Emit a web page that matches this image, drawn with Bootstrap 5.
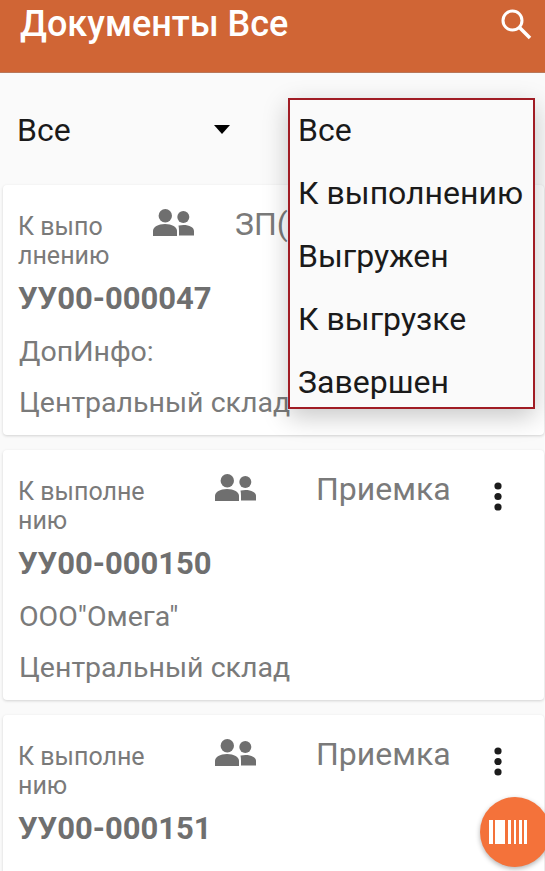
<!DOCTYPE html>
<html lang="ru">
<head>
  <meta charset="UTF-8">
  <title>Документы Все</title>
  <meta name="viewport" content="width=device-width, initial-scale=1">
  <link href="https://cdn.jsdelivr.net/npm/bootstrap@5.3.0/dist/css/bootstrap.min.css" rel="stylesheet">
  <style>
    body {
      background: #fafafa;
      font-family: Roboto, "Liberation Sans", sans-serif;
      height: 871px;
      overflow: hidden;
    }

    .page-clip {
      height: 871px;
      overflow: hidden;
    }

    .app-bar {
      background: #d06535;
      height: 73px;
      padding: 0 13px 0 20px;
      align-items: flex-start;
      border-bottom: 1px solid #b9785a;
    }

    .app-title {
      color: #fff;
      font-size: 36px;
      font-weight: 500;
      line-height: 48px;
    }

    .search-btn {
      margin-top: 8px;
    }

    .filter-row {
      height: 112px;
      padding: 2px 17px 0;
      font-size: 32px;
      color: #1a1a1a;
    }

    .filter-select {
      width: 213px;
    }

    .caret {
      width: 0;
      height: 0;
      margin-bottom: 2px;
      border-left: 8.5px solid transparent;
      border-right: 8.5px solid transparent;
      border-top: 9px solid #000;
    }

    .status-menu {
      position: absolute;
      top: 98px;
      left: 288px;
      width: 247px;
      height: 311px;
      padding: 0;
      background: #fafafa;
      border: 2px solid #a01c24;
      border-radius: 0;
      box-shadow: 0 8px 24px rgba(0, 0, 0, .22);
      z-index: 5;
    }

    .status-menu .dropdown-item {
      height: 63px;
      line-height: 60px;
      padding: 0 0 0 8px;
      font-size: 32px;
      color: #1a1a1a;
    }

    .doc-card {
      margin: 0 0 15px 3px;
      width: 541px;
      height: 250px;
      border: 0;
      border-radius: 4px;
      box-shadow: 0 1px 3px rgba(0, 0, 0, .16);
      color: #7a7a7a;
    }

    .doc-top {
      padding: 24px 0 0 15px;
      height: 89px;
    }

    .doc-status {
      font-size: 25px;
      line-height: 29px;
      word-break: break-all;
      flex: none;
      margin-top: 3px;
    }

    .status-narrow { width: 93px; }
    .status-wide { width: 136px; }

    .doc-icon {
      flex: none;
    }

    .icon-narrow { margin-left: 42px; }
    .icon-wide { margin-left: 61px; }

    .doc-type {
      font-size: 32px;
      line-height: 36px;
      margin-top: -3px;
      white-space: nowrap;
    }

    .type-narrow { margin-left: 41px; }
    .type-wide { margin-left: 60px; }

    .doc-more {
      margin: 7px 0 0 42px;
      flex: none;
    }

    .doc-num {
      padding-left: 15px;
      font-size: 31px;
      font-weight: 700;
      line-height: 36px;
      margin-top: 7px;
      color: #6f6f6f;
    }

    .doc-line {
      padding-left: 16px;
      font-size: 28.5px;
      line-height: 34px;
      white-space: nowrap;
      margin-top: 18px;
    }

    .doc-line + .doc-line {
      margin-top: 17px;
    }

    .scan-fab {
      position: absolute;
      left: 480px;
      top: 797px;
      width: 70px;
      height: 70px;
      border: 0;
      border-radius: 50%;
      padding: 0 14px 0 0;
      background: #f4723a;
      box-shadow: 0 2px 5px rgba(0, 0, 0, .3);
      z-index: 6;
    }
  </style>
</head>
<body>

<div class="page-clip">

<nav class="navbar app-bar d-flex justify-content-between flex-nowrap">
  <span class="app-title">Документы Все</span>
  <svg class="search-btn" width="32" height="32" viewBox="0 0 32 32" fill="none" stroke="#fff" stroke-width="3">
    <circle cx="12.5" cy="12.5" r="9.5"/>
    <path d="M19.5 19.5L30 30" stroke-width="3.6"/>
  </svg>
</nav>

<div class="filter-row d-flex align-items-center">
  <div class="filter-select d-flex justify-content-between align-items-center">
    <span>Все</span>
    <span class="caret"></span>
  </div>
</div>

<ul class="dropdown-menu show status-menu">
  <li><a class="dropdown-item" href="#">Все</a></li>
  <li><a class="dropdown-item" href="#">К выполнению</a></li>
  <li><a class="dropdown-item" href="#">Выгружен</a></li>
  <li><a class="dropdown-item" href="#">К выгрузке</a></li>
  <li><a class="dropdown-item" href="#">Завершен</a></li>
</ul>

<div class="card doc-card">
  <div class="doc-top d-flex">
    <div class="doc-status status-narrow">К выполнению</div>
    <svg class="doc-icon icon-narrow" width="41" height="27" viewBox="0 0 41 27" fill="#6f6f6f"><circle cx="12.3" cy="6.7" r="6.7"/><circle cx="30.3" cy="8" r="6"/><path d="M0 27v-5c0-4 5-7 12-7s12 3 12 7v5z"/><path d="M26 16.500c1.500-.3 3-.5 4.500-.5 6 0 10.500 2.500 10.500 6v4.500H26v-4.500c0-2-.2-4-.5-5.500z"/></svg>
    <div class="doc-type type-narrow">ЗП(</div>
  </div>
  <div class="doc-num">УУ00-000047</div>
  <div class="doc-line">ДопИнфо:</div>
  <div class="doc-line">Центральный склад</div>
</div>

<div class="card doc-card">
  <div class="doc-top d-flex">
    <div class="doc-status status-wide">К выполнению</div>
    <svg class="doc-icon icon-wide" width="41" height="27" viewBox="0 0 41 27" fill="#6f6f6f"><circle cx="12.3" cy="6.7" r="6.7"/><circle cx="30.3" cy="8" r="6"/><path d="M0 27v-5c0-4 5-7 12-7s12 3 12 7v5z"/><path d="M26 16.500c1.500-.3 3-.5 4.500-.5 6 0 10.500 2.500 10.500 6v4.500H26v-4.500c0-2-.2-4-.5-5.500z"/></svg>
    <div class="doc-type type-wide">Приемка</div>
    <svg class="doc-more" width="10" height="32" viewBox="0 0 10 32" fill="#1c1c1c"><circle cx="5" cy="5" r="3.6"/><circle cx="5" cy="15.500" r="3.6"/><circle cx="5" cy="26" r="3.6"/></svg>
  </div>
  <div class="doc-num">УУ00-000150</div>
  <div class="doc-line">ООО"Омега"</div>
  <div class="doc-line">Центральный склад</div>
</div>

<div class="card doc-card">
  <div class="doc-top d-flex">
    <div class="doc-status status-wide">К выполнению</div>
    <svg class="doc-icon icon-wide" width="41" height="27" viewBox="0 0 41 27" fill="#6f6f6f"><circle cx="12.3" cy="6.7" r="6.7"/><circle cx="30.3" cy="8" r="6"/><path d="M0 27v-5c0-4 5-7 12-7s12 3 12 7v5z"/><path d="M26 16.500c1.500-.3 3-.5 4.500-.5 6 0 10.500 2.500 10.500 6v4.500H26v-4.500c0-2-.2-4-.5-5.500z"/></svg>
    <div class="doc-type type-wide">Приемка</div>
    <svg class="doc-more" width="10" height="32" viewBox="0 0 10 32" fill="#1c1c1c"><circle cx="5" cy="5" r="3.6"/><circle cx="5" cy="15.500" r="3.6"/><circle cx="5" cy="26" r="3.6"/></svg>
  </div>
  <div class="doc-num">УУ00-000151</div>
</div>

</div>

<button class="scan-fab d-flex align-items-center justify-content-center" type="button" aria-label="Сканировать">
  <svg width="38" height="24" viewBox="0 0 38 24" fill="#fff"><rect x="0" width="4" height="24"/><rect x="6" width="10" height="24"/><rect x="19" width="3" height="24"/><rect x="25" width="2" height="24"/><rect x="30" width="3" height="24"/><rect x="35" width="3" height="24"/></svg>
</button>

<script src="https://cdn.jsdelivr.net/npm/bootstrap@5.3.0/dist/js/bootstrap.bundle.min.js"></script>
</body>
</html>
